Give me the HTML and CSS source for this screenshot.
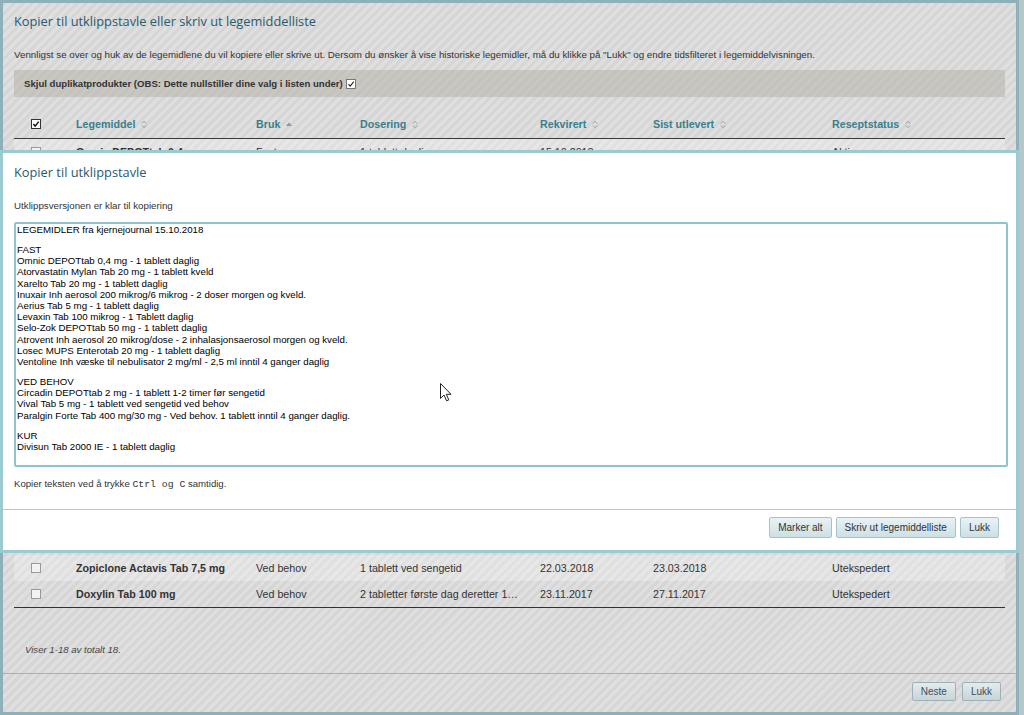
FILE: index.html
```html
<!DOCTYPE html>
<html lang="no">
<head>
<meta charset="utf-8">
<title>Kopier til utklippstavle</title>
<link rel="stylesheet" href="styles.css">
</head>
<body>
<div class="frame">
  <div class="dlg-body">
    <h1 class="dlg-title">Kopier til utklippstavle eller skriv ut legemiddelliste</h1>
    <p class="intro">Vennligst se over og huk av de legemidlene du vil kopiere eller skrive ut. Dersom du ønsker å vise historiske legemidler, må du klikke på "Lukk" og endre tidsfilteret i legemiddelvisningen.</p>
    <div class="dup-bar">
      <span>Skjul duplikatprodukter (OBS: Dette nullstiller dine valg i listen under)</span>
      <span class="cb cb-white"><svg viewBox="0 0 10 10"><path d="M1.8 5.2 L4 7.6 L8.4 2" fill="none" stroke="#222" stroke-width="1.3"/></svg></span>
    </div>
    <div class="table">
      <div class="row thead">
        <span class="cb cb-head"><svg viewBox="0 0 10 10"><path d="M1.8 5 L4 7.6 L8.4 2" fill="none" stroke="#111" stroke-width="1.8"/></svg></span>
        <span class="th">Legemiddel <svg class="sort" viewBox="0 0 6 9"><path d="M0.8 3.6 L3 1.2 L5.2 3.6 M0.8 5.4 L3 7.8 L5.2 5.4" fill="none" stroke="#98a6aa" stroke-width="1"/></svg></span>
        <span class="th">Bruk <svg class="up" viewBox="0 0 6 4"><path d="M0 4 L3 0.6 L6 4 Z" fill="#8d979a"/></svg></span>
        <span class="th">Dosering <svg class="sort" viewBox="0 0 6 9"><path d="M0.8 3.6 L3 1.2 L5.2 3.6 M0.8 5.4 L3 7.8 L5.2 5.4" fill="none" stroke="#98a6aa" stroke-width="1"/></svg></span>
        <span class="th">Rekvirert <svg class="sort" viewBox="0 0 6 9"><path d="M0.8 3.6 L3 1.2 L5.2 3.6 M0.8 5.4 L3 7.8 L5.2 5.4" fill="none" stroke="#98a6aa" stroke-width="1"/></svg></span>
        <span class="th">Sist utlevert <svg class="sort" viewBox="0 0 6 9"><path d="M0.8 3.6 L3 1.2 L5.2 3.6 M0.8 5.4 L3 7.8 L5.2 5.4" fill="none" stroke="#98a6aa" stroke-width="1"/></svg></span>
        <span class="th">Reseptstatus <svg class="sort" viewBox="0 0 6 9"><path d="M0.8 3.6 L3 1.2 L5.2 3.6 M0.8 5.4 L3 7.8 L5.2 5.4" fill="none" stroke="#98a6aa" stroke-width="1"/></svg></span>
      </div>
      <div class="tbody">
        <div class="row"><span class="cb"></span><span class="name">Omnic DEPOTtab 0,4 mg</span><span>Fast</span><span class="dose">1 tablett daglig</span><span>15.10.2018</span><span></span><span>Aktiv</span></div>
        <div class="row"><span class="cb"></span><span class="name">Atorvastatin Mylan Tab 20 mg</span><span>Fast</span><span class="dose">1 tablett kveld</span><span>15.10.2018</span><span>15.10.2018</span><span>Aktiv</span></div>
        <div class="row"><span class="cb"></span><span class="name">Xarelto Tab 20 mg</span><span>Fast</span><span class="dose">1 tablett daglig</span><span>12.09.2018</span><span>14.09.2018</span><span>Aktiv</span></div>
        <div class="row"><span class="cb"></span><span class="name">Inuxair Inh aerosol</span><span>Fast</span><span class="dose">2 doser morgen og kveld.</span><span>12.09.2018</span><span>14.09.2018</span><span>Aktiv</span></div>
        <div class="row"><span class="cb"></span><span class="name">Aerius Tab 5 mg</span><span>Fast</span><span class="dose">1 tablett daglig</span><span>03.09.2018</span><span>04.09.2018</span><span>Aktiv</span></div>
        <div class="row"><span class="cb"></span><span class="name">Levaxin Tab 100 mikrog</span><span>Fast</span><span class="dose">1 Tablett daglig</span><span>03.09.2018</span><span>04.09.2018</span><span>Aktiv</span></div>
        <div class="row"><span class="cb"></span><span class="name">Selo-Zok DEPOTtab 50 mg</span><span>Fast</span><span class="dose">1 tablett daglig</span><span>20.08.2018</span><span>21.08.2018</span><span>Aktiv</span></div>
        <div class="row"><span class="cb"></span><span class="name">Atrovent Inh aerosol</span><span>Fast</span><span class="dose">2 inhalasjonsaerosol</span><span>20.08.2018</span><span>21.08.2018</span><span>Aktiv</span></div>
        <div class="row"><span class="cb"></span><span class="name">Losec MUPS Enterotab 20 mg</span><span>Fast</span><span class="dose">1 tablett daglig</span><span>02.07.2018</span><span>03.07.2018</span><span>Aktiv</span></div>
        <div class="row"><span class="cb"></span><span class="name">Ventoline Inh væske</span><span>Fast</span><span class="dose">2,5 ml inntil 4 ganger</span><span>02.07.2018</span><span>03.07.2018</span><span>Aktiv</span></div>
        <div class="row"><span class="cb"></span><span class="name">Circadin DEPOTtab 2 mg</span><span>Ved behov</span><span class="dose">1 tablett før sengetid</span><span>14.06.2018</span><span>15.06.2018</span><span>Aktiv</span></div>
        <div class="row"><span class="cb"></span><span class="name">Vival Tab 5 mg</span><span>Ved behov</span><span class="dose">1 tablett ved sengetid</span><span>14.06.2018</span><span>15.06.2018</span><span>Aktiv</span></div>
        <div class="row"><span class="cb"></span><span class="name">Paralgin Forte Tab</span><span>Ved behov</span><span class="dose">1 tablett inntil 4 ganger</span><span>30.05.2018</span><span>31.05.2018</span><span>Aktiv</span></div>
        <div class="row"><span class="cb"></span><span class="name">Divisun Tab 2000 IE</span><span>Kur</span><span class="dose">1 tablett daglig</span><span>30.05.2018</span><span>31.05.2018</span><span>Aktiv</span></div>
        <div class="row"><span class="cb"></span><span class="name">Paracet Tab 500 mg</span><span>Ved behov</span><span class="dose">1-2 tabletter ved behov</span><span>10.04.2018</span><span>11.04.2018</span><span>Utekspedert</span></div>
        <div class="row"><span class="cb"></span><span class="name">Imovane Tab 5 mg</span><span>Ved behov</span><span class="dose">1 tablett ved sengetid</span><span>10.04.2018</span><span>11.04.2018</span><span>Utekspedert</span></div>
        <div class="row"><span class="cb"></span><span class="name">Zopiclone Actavis Tab 7,5 mg</span><span>Ved behov</span><span class="dose">1 tablett ved sengetid</span><span>22.03.2018</span><span>23.03.2018</span><span>Utekspedert</span></div>
        <div class="row"><span class="cb"></span><span class="name">Doxylin Tab 100 mg</span><span>Ved behov</span><span class="dose">2 tabletter første dag deretter 1 tablett daglig</span><span>23.11.2017</span><span>27.11.2017</span><span>Utekspedert</span></div>
      </div>
    </div>
    <p class="count">Viser 1-18 av totalt 18.</p>
  </div>
  <div class="dlg-foot">
    <button class="btn btn-gray">Neste</button>
    <button class="btn btn-gray">Lukk</button>
  </div>
</div>

<div class="modal">
  <div class="m-body">
    <h2 class="dlg-title">Kopier til utklippstavle</h2>
    <p class="m-lead">Utklippsversjonen er klar til kopiering</p>
    <div class="clip">
      <p>LEGEMIDLER fra kjernejournal 15.10.2018</p>
      <p>FAST<br>Omnic DEPOTtab 0,4 mg - 1 tablett daglig<br>Atorvastatin Mylan Tab 20 mg - 1 tablett kveld<br>Xarelto Tab 20 mg - 1 tablett daglig<br>Inuxair Inh aerosol 200 mikrog/6 mikrog - 2 doser morgen og kveld.<br>Aerius Tab 5 mg - 1 tablett daglig<br>Levaxin Tab 100 mikrog - 1 Tablett daglig<br>Selo-Zok DEPOTtab 50 mg - 1 tablett daglig<br>Atrovent Inh aerosol 20 mikrog/dose - 2 inhalasjonsaerosol morgen og kveld.<br>Losec MUPS Enterotab 20 mg - 1 tablett daglig<br>Ventoline Inh væske til nebulisator 2 mg/ml - 2,5 ml inntil 4 ganger daglig</p>
      <p>VED BEHOV<br>Circadin DEPOTtab 2 mg - 1 tablett 1-2 timer før sengetid<br>Vival Tab 5 mg - 1 tablett ved sengetid ved behov<br>Paralgin Forte Tab 400 mg/30 mg - Ved behov. 1 tablett inntil 4 ganger daglig.</p>
      <p>KUR<br>Divisun Tab 2000 IE - 1 tablett daglig</p>
    </div>
    <p class="hint">Kopier teksten ved å trykke <code>Ctrl og C</code> samtidig.</p>
  </div>
  <div class="m-foot">
    <button class="btn btn-blue">Marker alt</button>
    <button class="btn btn-blue">Skriv ut legemiddelliste</button>
    <button class="btn btn-blue">Lukk</button>
  </div>
</div>

<svg class="cursor" viewBox="0 0 12 19" width="12" height="19"><path d="M0.5 0.5 L0.5 15.5 L4 12 L6.6 17.8 L8.8 16.9 L6.3 11.3 L11 11.3 Z" fill="#fff" stroke="#222" stroke-width="1" stroke-linejoin="round"/></svg>
</body>
</html>
```
FILE: styles.css
```css
html, body {
  margin: 0;
  padding: 0;
}

body {
  width: 1024px;
  height: 715px;
  overflow: hidden;
  position: relative;
  background: #b7c6ca;
  font-family: "Liberation Sans", Arial, sans-serif;
  color: #333;
}

.frame {
  width: 1019px;
  height: 715px;
  box-sizing: border-box;
  border: 3px solid #8eb0b8;
  background: repeating-linear-gradient(135deg, #d6d6d6 0 3.2px, #dfdfdf 3.2px 6.4px);
  display: flex;
  flex-direction: column;
}

.dlg-body {
  padding: 9px 11px 0 11px;
}

.dlg-title {
  margin: 0;
  font-family: "Open Sans", "DejaVu Sans", sans-serif;
  font-weight: 400;
  font-size: 12.8px;
  line-height: 18px;
  color: #2a5a6f;
}

.intro {
  margin: 19px 0 0;
  font-size: 9.75px;
  line-height: 12px;
  color: #333;
}

.dup-bar {
  margin-top: 9px;
  height: 27px;
  display: flex;
  align-items: center;
  gap: 3px;
  padding-left: 10px;
  background: rgba(172, 166, 156, 0.42);
  font-weight: bold;
  font-size: 9.6px;
  color: #333;
}

.cb {
  display: inline-block;
  width: 10px;
  height: 10px;
  box-sizing: border-box;
  border: 1px solid #9a9a9a;
  background: #f2f2f2;
  margin-left: 17px;
}

.cb svg {
  display: block;
  width: 8px;
  height: 8px;
}

.dup-bar .cb {
  margin-left: 0;
  background: #fff;
  border-color: #777;
}

.cb-head {
  background: #fff;
  border-color: #333;
}

.table {
  margin-top: 13px;
}

.row {
  display: grid;
  grid-template-columns: 62px 180px 104px 180px 113px 179px 1fr;
  align-items: center;
  height: 26px;
  font-size: 10.7px;
  color: #333;
}

.row > span {
  white-space: nowrap;
}

.thead {
  height: 29px;
  border-bottom: 1px solid #3a3a3a;
  box-sizing: border-box;
}

.th {
  font-weight: bold;
  color: #3b7e8c;
  display: flex;
  align-items: center;
  gap: 6px;
}

.sort {
  width: 6px;
  height: 9px;
}

.up {
  width: 6px;
  height: 4px;
}

.tbody {
  border-bottom: 1px solid #333;
}

.tbody .row:nth-child(odd) {
  background: rgba(255, 255, 255, 0.25);
}

.name {
  font-weight: bold;
}

.dose {
  overflow: hidden;
  text-overflow: ellipsis;
  padding-right: 20px;
}

.count {
  margin: 36px 0 0 11px;
  font-style: italic;
  font-size: 9.6px;
  line-height: 12px;
  color: #444;
}

.dlg-foot {
  margin-top: auto;
  height: 39px;
  box-sizing: border-box;
  border-top: 1px solid #9db5bb;
  padding: 8px 15px 0 0;
  display: flex;
  justify-content: flex-end;
  align-items: flex-start;
  gap: 6px;
}

.btn {
  font-family: "Liberation Sans", Arial, sans-serif;
  font-size: 10px;
  color: #333;
  border-radius: 2px;
  padding: 0 8px;
  cursor: default;
}

.btn-gray {
  height: 19px;
  background: linear-gradient(#e4ebed, #c8d4d8);
  border: 1px solid #9fb1b6;
  color: #405058;
}

.btn-blue {
  height: 21px;
  background: linear-gradient(#e8f2f4, #cde0e6);
  border: 1px solid #a6c3ca;
  color: #333;
}

.modal {
  position: absolute;
  left: 0;
  top: 150px;
  width: 1019px;
  height: 403px;
  box-sizing: border-box;
  border: 3px solid #9ccad1;
  background: #fff;
  display: flex;
  flex-direction: column;
}

.m-body {
  padding: 10px 8px 0 11px;
}

.m-lead {
  margin: 19px 0 0;
  font-size: 9.75px;
  line-height: 12px;
  color: #333;
}

.clip {
  margin-top: 10px;
  width: 994px;
  height: 245px;
  box-sizing: border-box;
  border: 2px solid #8fc4cc;
  border-radius: 2px;
  padding: 0 2px 0 1px;
  font-size: 9.72px;
  line-height: 11.2px;
  color: #000;
  overflow: hidden;
}

.clip p {
  margin: 0 0 8.8px;
}

.hint {
  margin: 11px 0 0;
  font-size: 9.6px;
  line-height: 12px;
  color: #333;
}

.hint code {
  font-family: "Liberation Mono", "Courier New", monospace;
  font-size: 9.8px;
}

.m-foot {
  margin-top: auto;
  height: 41px;
  box-sizing: border-box;
  border-top: 1px solid #a9d0d6;
  padding: 7px 17px 0 0;
  display: flex;
  justify-content: flex-end;
  align-items: flex-start;
  gap: 4px;
}

.cursor {
  position: absolute;
  left: 440px;
  top: 383px;
}
```
